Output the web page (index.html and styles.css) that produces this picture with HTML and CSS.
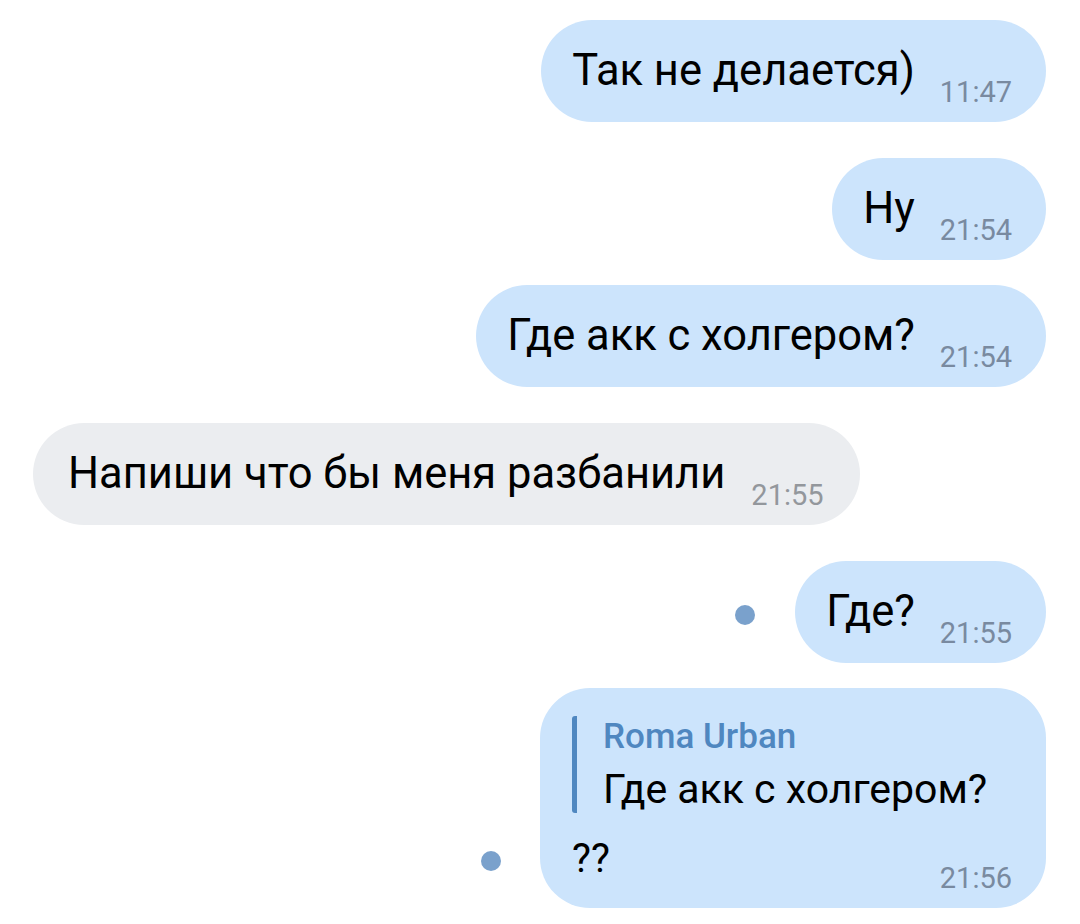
FILE: index.html
```html
<!DOCTYPE html>
<html lang="ru">
<head>
<meta charset="utf-8">
<link rel="stylesheet" href="styles.css">
</head>
<body>
<div class="chat">
  <div class="row out">
    <div class="bubble">
      <span class="text">Так не делается)</span>
      <span class="time">11:47</span>
    </div>
  </div>
  <div class="row out gap-big">
    <div class="bubble">
      <span class="text">Ну</span>
      <span class="time">21:54</span>
    </div>
  </div>
  <div class="row out gap-small">
    <div class="bubble">
      <span class="text">Где акк с холгером?</span>
      <span class="time">21:54</span>
    </div>
  </div>
  <div class="row in gap-big">
    <div class="bubble">
      <span class="text">Напиши что бы меня разбанили</span>
      <span class="time">21:55</span>
    </div>
  </div>
  <div class="row out gap-big">
    <span class="unread"></span>
    <div class="bubble">
      <span class="text">Где?</span>
      <span class="time">21:55</span>
    </div>
  </div>
  <div class="row out gap-small bottom">
    <span class="unread"></span>
    <div class="bubble reply">
      <div class="quote">
        <div class="quote-name">Roma Urban</div>
        <div class="quote-text">Где акк с холгером?</div>
      </div>
      <div class="reply-body">
        <span class="text">??</span>
        <span class="time">21:56</span>
      </div>
    </div>
  </div>
</div>
</body>
</html>
```

FILE: styles.css
```css
* { box-sizing: border-box; }
html, body {
  margin: 0;
  padding: 0;
  background: #ffffff;
}
body {
  font-family: Roboto, "Noto Sans", sans-serif;
  color: #000000;
  width: 1080px;
  height: 924px;
  overflow: hidden;
}
.chat {
  display: flex;
  flex-direction: column;
  padding: 20px 34px 0 33px;
}
.row {
  display: flex;
  align-items: center;
}
.row.out { justify-content: flex-end; }
.row.in { justify-content: flex-start; }
.gap-big { margin-top: 36px; }
.gap-small { margin-top: 25px; }
.row.bottom { align-items: flex-end; }

.bubble {
  display: flex;
  align-items: flex-start;
  height: 102px;
  padding: 25px 34px 0 31px;
  border-radius: 51px;
  background: #cce4fc;
}
.row.in .bubble {
  background: #ebedf0;
  padding-left: 35px;
  padding-right: 36px;
}
.text {
  font-size: 43.5px;
  line-height: 52px;
  white-space: nowrap;
}
.time {
  font-size: 29px;
  line-height: 34px;
  color: #798aa0;
  margin-left: 25px;
  align-self: flex-end;
  margin-bottom: 13px;
  white-space: nowrap;
}
.row.in .time {
  color: #93979c;
  margin-left: 26px;
}
.unread {
  width: 20px;
  height: 20px;
  border-radius: 50%;
  background: #7aa1cc;
  margin-right: 40px;
  margin-top: 6px;
}
.row.bottom .unread {
  margin-right: 39px;
  margin-bottom: 37px;
}

.bubble.reply {
  display: flex;
  flex-direction: column;
  align-items: stretch;
  height: 220px;
  width: 506px;
  border-radius: 50px;
  padding: 28px 34px 0 32px;
}
.quote {
  border-left: 5px solid #4f87c0;
  border-radius: 3px;
  padding-left: 26px;
}
.quote-name {
  font-size: 35px;
  font-weight: 500;
  line-height: 41px;
  color: #4f87c0;
}
.quote-text {
  font-size: 41px;
  line-height: 48px;
  margin-top: 8px;
  white-space: nowrap;
}
.reply-body {
  display: flex;
  justify-content: space-between;
  align-items: flex-start;
  margin-top: 22px;
  height: 73px;
}
.reply-body .text {
  font-size: 40px;
  line-height: 47px;
}
.reply-body .time {
  align-self: flex-end;
  margin-bottom: 13px;
}
```
